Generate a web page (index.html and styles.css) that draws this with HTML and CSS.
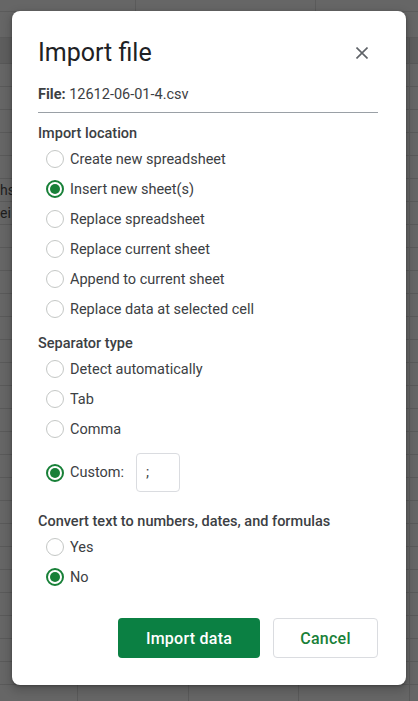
FILE: index.html
```html
<!DOCTYPE html>
<html lang="en">
<head>
<meta charset="utf-8">
<title>Import file</title>
<link rel="stylesheet" href="styles.css">
</head>
<body>
<div class="sheet">
  <div class="sheet-top"></div>
  <div class="sheet-row1"></div>
  <div class="sheet-head"></div>
  <div class="sheet-body">
    <div class="srow"></div>
    <div class="srow"></div>
    <div class="srow"></div>
    <div class="srow"></div>
    <div class="srow"></div>
    <div class="srow"><span class="cell-frag">hs</span></div>
    <div class="srow"><span class="cell-frag">ei</span></div>
    <div class="srow"></div>
    <div class="srow"></div>
    <div class="srow"></div>
    <div class="srow"></div>
    <div class="srow"></div>
    <div class="srow"></div>
    <div class="srow"></div>
    <div class="srow"></div>
    <div class="srow"></div>
    <div class="srow"></div>
    <div class="srow"></div>
    <div class="srow"></div>
    <div class="srow"></div>
    <div class="srow"></div>
    <div class="srow"></div>
    <div class="srow"></div>
    <div class="srow"></div>
    <div class="srow"></div>
    <div class="srow"></div>
    <div class="srow"><span class="cell-num">30.4</span></div>
  </div>
</div>

<div class="dialog">
  <div class="dlg-header">
    <h1 class="dlg-title">Import file</h1>
    <button class="close" aria-label="Close">
      <svg width="12" height="12" viewBox="0 0 12 12"><path d="M0.5 0.5 L11.5 11.5 M11.5 0.5 L0.5 11.5" stroke="#5f6368" stroke-width="1.6" fill="none"/></svg>
    </button>
  </div>
  <div class="file-line"><b>File:</b> 12612-06-01-4.csv</div>
  <div class="divider"></div>

  <div class="section-title first">Import location</div>
  <div class="options">
    <label class="opt"><span class="radio"></span>Create new spreadsheet</label>
    <label class="opt"><span class="radio on"></span>Insert new sheet(s)</label>
    <label class="opt"><span class="radio"></span>Replace spreadsheet</label>
    <label class="opt"><span class="radio"></span>Replace current sheet</label>
    <label class="opt"><span class="radio"></span>Append to current sheet</label>
    <label class="opt"><span class="radio"></span>Replace data at selected cell</label>
  </div>

  <div class="section-title">Separator type</div>
  <div class="options">
    <label class="opt"><span class="radio"></span>Detect automatically</label>
    <label class="opt"><span class="radio"></span>Tab</label>
    <label class="opt"><span class="radio"></span>Comma</label>
    <label class="opt custom"><span class="radio on"></span>Custom:<input class="sep-input" type="text" value=";"></label>
  </div>

  <div class="section-title convert">Convert text to numbers, dates, and formulas</div>
  <div class="options">
    <label class="opt"><span class="radio"></span>Yes</label>
    <label class="opt"><span class="radio on"></span>No</label>
  </div>

  <div class="actions">
    <button class="btn primary">Import data</button>
    <button class="btn secondary">Cancel</button>
  </div>
</div>
</body>
</html>
```
FILE: styles.css
```css
* { box-sizing: border-box; }
html, body {
  margin: 0;
  padding: 0;
  width: 418px;
  height: 701px;
  overflow: hidden;
  background: #666666;
  font-family: Roboto, "Liberation Sans", sans-serif;
}

/* dimmed spreadsheet behind the dialog */
.sheet {
  width: 418px;
  height: 701px;
  display: flex;
  flex-direction: column;
}
.sheet-top {
  height: 12px;
  border-bottom: 1px solid #5b5b5b;
  background-image:
    linear-gradient(to right, transparent 135px, #5b5b5b 135px, #5b5b5b 136px, transparent 136px),
    linear-gradient(to right, transparent 315px, #5b5b5b 315px, #5b5b5b 316px, transparent 316px);
}
.sheet-row1 {
  height: 26px;
  border-bottom: 1px solid #5b5b5b;
}
.sheet-head {
  height: 26px;
  background-color: #5e5e5e;
  border-bottom: 1px solid #585858;
  background-image: linear-gradient(to right, transparent 409px, #555 409px, #555 410px, transparent 410px);
}
.sheet-body {
  flex: 1;
  background-image:
    linear-gradient(to right, transparent 77px, #5a5a5a 77px, #5a5a5a 78px, transparent 78px),
    linear-gradient(to right, transparent 188px, #5a5a5a 188px, #5a5a5a 189px, transparent 189px),
    linear-gradient(to right, transparent 298px, #5a5a5a 298px, #5a5a5a 299px, transparent 299px),
    linear-gradient(to right, transparent 409px, #5a5a5a 409px, #5a5a5a 410px, transparent 410px);
}
.srow {
  height: 23px;
  border-bottom: 1px solid #5a5a5a;
  font-family: Roboto, "Liberation Sans", sans-serif;
  font-size: 14px;
  line-height: 23px;
  color: #1e1e1e;
}
.cell-frag {
  display: block;
  padding-left: 0;
}
.cell-num {
  display: block;
  padding-left: 80px;
  padding-top: 2px;
}

/* dialog */
.dialog {
  position: absolute;
  left: 12px;
  top: 11px;
  width: 394px;
  background: #ffffff;
  border-radius: 8px;
  padding: 26px 28px 27px 26px;
  box-shadow: 0 4px 8px 3px rgba(0,0,0,0.15), 0 1px 3px rgba(0,0,0,0.3);
  color: #3c4043;
}
.dlg-header {
  display: flex;
  align-items: center;
  justify-content: space-between;
  height: 32px;
}
.dlg-title {
  margin: 0;
  font-family: Roboto, "Liberation Sans", sans-serif;
  font-weight: 400;
  font-size: 25px;
  line-height: 32px;
  color: #202124;
}
.close {
  width: 32px;
  height: 32px;
  border: none;
  background: transparent;
  padding: 0;
  display: flex;
  align-items: center;
  justify-content: center;
}
.file-line {
  margin-top: 16px;
  font-size: 14.5px;
  line-height: 20px;
  color: #3c4043;
}
.file-line b { font-weight: 700; }
.divider {
  margin-top: 7px;
  height: 1px;
  background: #9aa0a6;
}
.section-title {
  margin-top: 10px;
  font-size: 14.5px;
  font-weight: 500;
  line-height: 20px;
  color: #3c4043;
}
.section-title.first { margin-top: 11px; }
.section-title.convert { margin-top: 20px; }

.options {
  display: flex;
  flex-direction: column;
}
.opt {
  height: 30px;
  display: flex;
  align-items: center;
  padding-left: 8px;
  font-size: 14.5px;
  color: #3c4043;
}
.radio {
  width: 18px;
  height: 18px;
  border-radius: 50%;
  border: 1px solid #c4c7c5;
  margin-right: 6px;
  display: flex;
  align-items: center;
  justify-content: center;
  flex: none;
}
.radio.on {
  border: 2px solid #188038;
}
.radio.on::after {
  content: "";
  width: 10px;
  height: 10px;
  border-radius: 50%;
  background: #188038;
}
.opt.custom {
  height: 39px;
  margin-top: 9px;
}
.sep-input {
  margin-left: 12px;
  width: 44px;
  height: 39px;
  border: 1px solid #dadce0;
  border-radius: 4px;
  padding: 0 0 0 9px;
  font-family: Roboto, "Liberation Sans", sans-serif;
  font-size: 14.5px;
  color: #3c4043;
  outline: none;
}

.actions {
  margin-top: 26px;
  display: flex;
  justify-content: flex-end;
  gap: 13px;
}
.btn {
  height: 40px;
  border-radius: 4px;
  font-family: Roboto, "Liberation Sans", sans-serif;
  font-size: 16px;
  font-weight: 500;
  letter-spacing: 0.25px;
  padding: 0;
}
.btn.primary {
  width: 142px;
  background: #0b8043;
  color: #ffffff;
  border: none;
}
.btn.secondary {
  width: 105px;
  background: #ffffff;
  color: #188038;
  border: 1px solid #dadce0;
}
```
